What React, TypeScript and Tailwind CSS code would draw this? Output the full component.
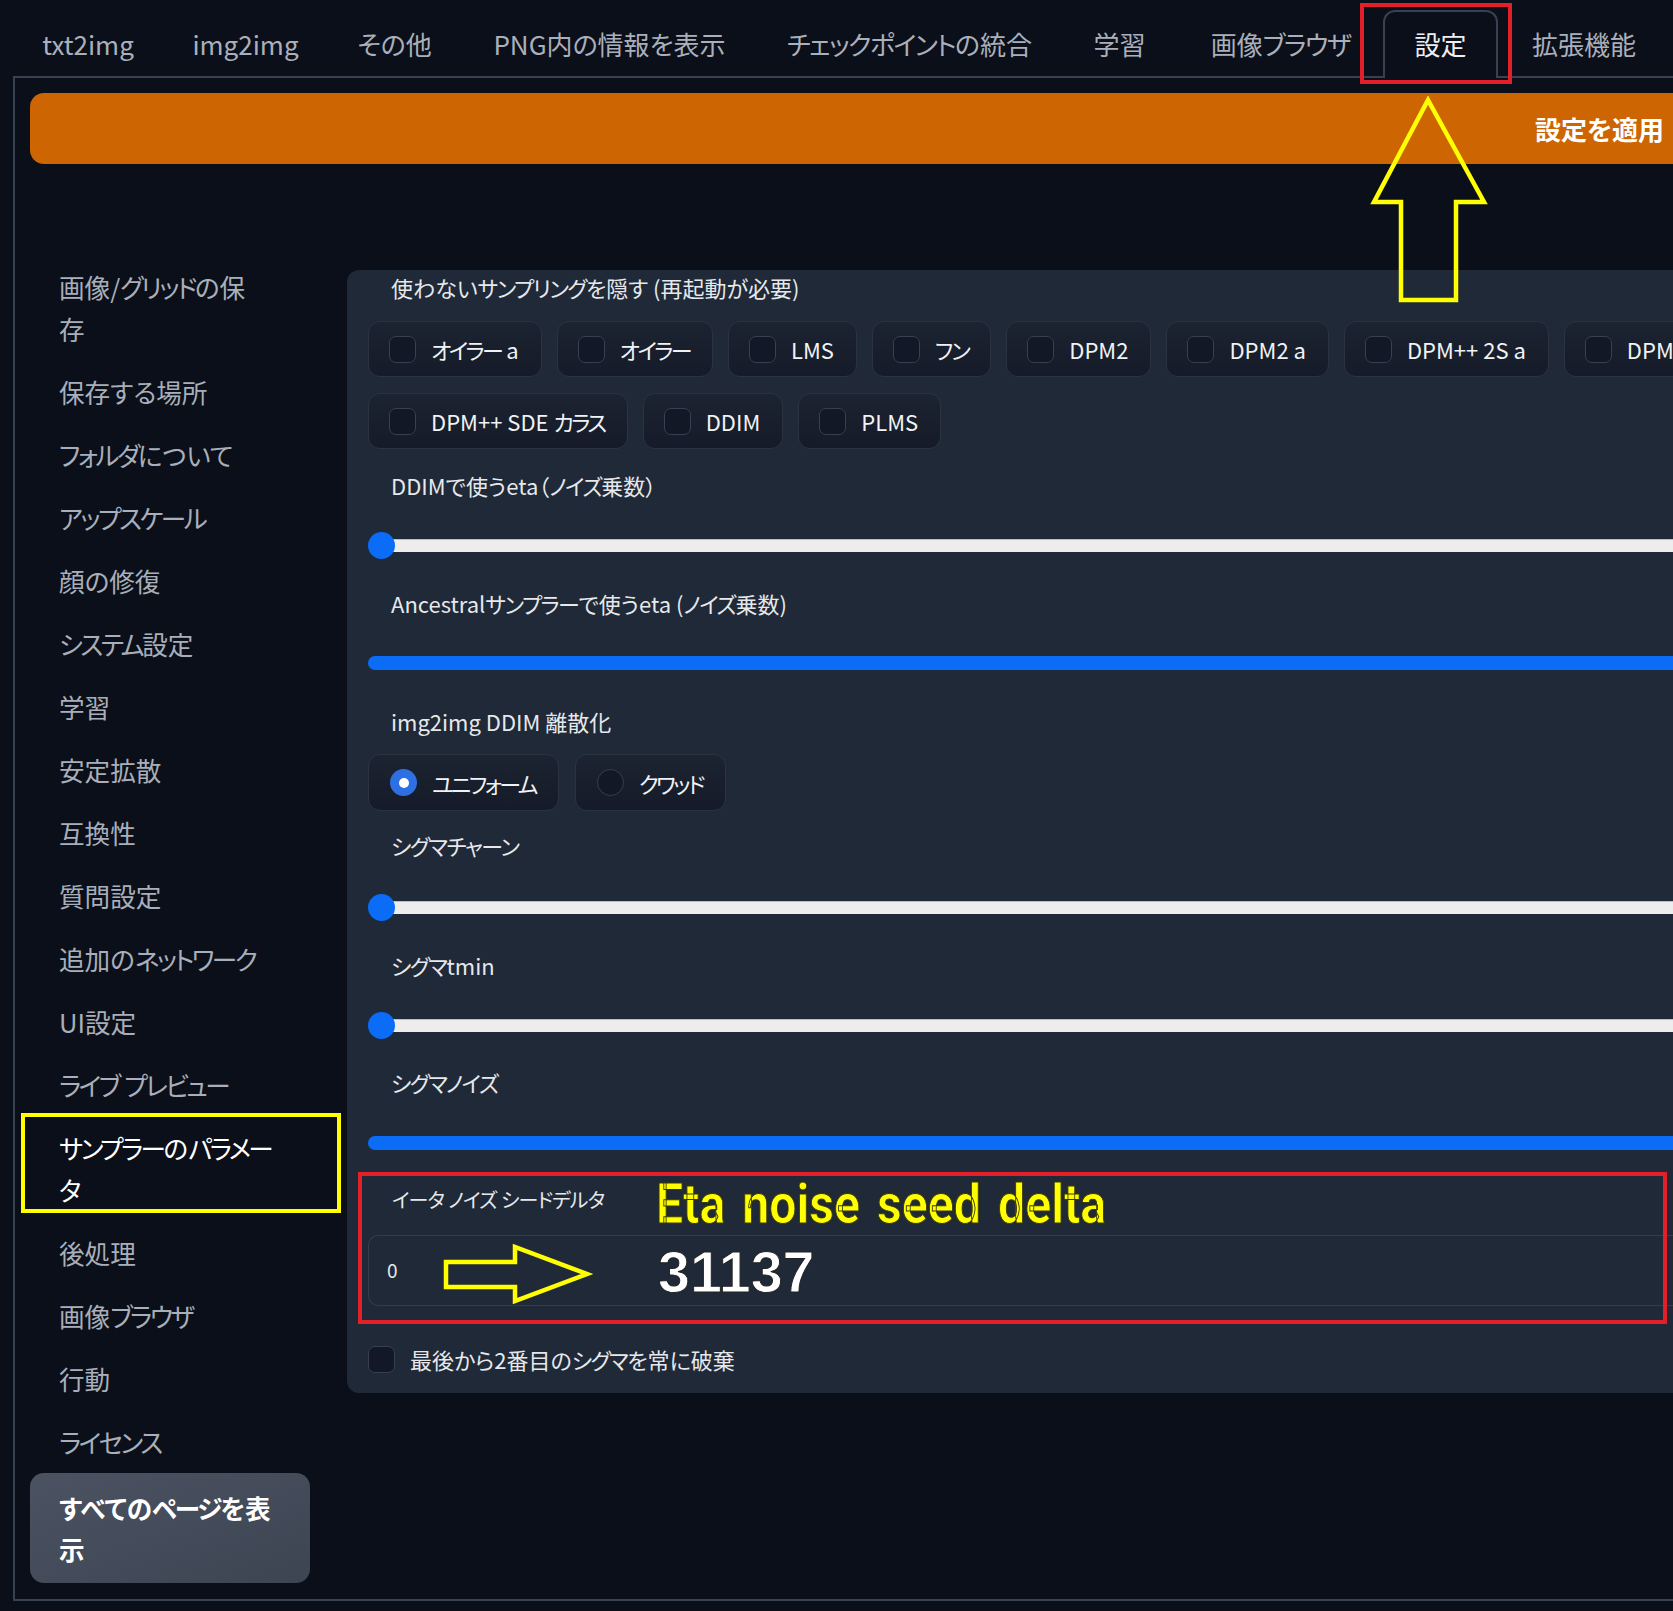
import React from "react";

type Tab = { label: string; cls: string; active?: boolean };

const tabs: Tab[] = [
  { label: "txt2img", cls: "w-[150px]" },
  { label: "img2img", cls: "w-[165px]" },
  { label: "その他", cls: "w-[133px]" },
  { label: "PNG内の情報を表示", cls: "w-[297px]" },
  { label: "チェックポイントの統合", cls: "w-[303px]" },
  { label: "学習", cls: "w-[117px]" },
  { label: "画像ブラウザ", cls: "w-[205px]" },
  { label: "設定", cls: "w-[115px]", active: true },
  { label: "拡張機能", cls: "w-[172px]" },
];

const sideItems: { lines: string[]; active?: boolean }[] = [
  { lines: ["画像/グリッドの保", "存"] },
  { lines: ["保存する場所"] },
  { lines: ["フォルダについて"] },
  { lines: ["アップスケール"] },
  { lines: ["顔の修復"] },
  { lines: ["システム設定"] },
  { lines: ["学習"] },
  { lines: ["安定拡散"] },
  { lines: ["互換性"] },
  { lines: ["質問設定"] },
  { lines: ["追加のネットワーク"] },
  { lines: ["UI設定"] },
  { lines: ["ライブ\u00a0プレビュー"] },
  { lines: ["サンプラーのパラメー", "タ"], active: true },
  { lines: ["後処理"] },
  { lines: ["画像ブラウザ"] },
  { lines: ["行動"] },
  { lines: ["ライセンス"] },
];

const row1 = [
  "オイラー a",
  "オイラー",
  "LMS",
  "フン",
  "DPM2",
  "DPM2 a",
  "DPM++ 2S a",
  "DPM++ 2M",
  "DPM++ SDE",
  "DPM fast",
  "DPM adaptive",
  "LMS カラス",
];
const row2 = ["DPM++ SDE カラス", "DDIM", "PLMS"];

// Katakana runs are drawn a little tighter, as in the reference's Japanese face.
function K({ text, tr }: { text: string; tr: string }) {
  const parts = text.split(/([\u30a0-\u30ff]+)/);
  return (
    <>
      {parts.map((p, i) =>
        /[\u30a0-\u30ff]/.test(p) ? (
          <span key={i} className={tr}>
            {p}
          </span>
        ) : (
          <React.Fragment key={i}>{p}</React.Fragment>
        )
      )}
    </>
  );
}

function Chip({ label }: { label: string }) {
  return (
    <div className="flex h-[56px] shrink-0 items-center gap-[15px] rounded-[12px] border border-[#2b3342] bg-linear-to-b from-[#1c2331] to-[#151b28] pl-[20px] pr-[22px]">
      <span className="h-[27px] w-[27px] shrink-0 rounded-[7px] border border-[#364052] bg-[#121826]" />
      <span className="whitespace-nowrap text-[22px] leading-none text-[#f1f2f4]">
        <K text={label} tr="tracking-[-2.5px]" />
      </span>
    </div>
  );
}

function Radio({ label, checked }: { label: string; checked?: boolean }) {
  return (
    <div className="flex h-[57px] shrink-0 items-center gap-[15px] rounded-[12px] border border-[#2b3342] bg-linear-to-b from-[#1c2331] to-[#151b28] pl-[21px] pr-[22px]">
      {checked ? (
        <span className="flex h-[27px] w-[27px] items-center justify-center rounded-full bg-[#2f6fe4]">
          <span className="h-[10px] w-[10px] rounded-full bg-white" />
        </span>
      ) : (
        <span className="h-[27px] w-[27px] rounded-full border border-[#364052] bg-[#121826]" />
      )}
      <span className="whitespace-nowrap text-[22px] leading-none text-[#f1f2f4]">
        <K text={label} tr="tracking-[-2.5px]" />
      </span>
    </div>
  );
}

function Label({ text, mt }: { text: string; mt: string }) {
  return (
    <div className={`${mt} pl-[44px] text-[22px] leading-[30px] whitespace-nowrap text-[#e6e8eb]`}>
      <K text={text} tr="tracking-[-1.5px]" />
    </div>
  );
}

function Slider({ full, mt }: { full?: boolean; mt: string }) {
  if (full) {
    return (
      <div className={`${mt} flex h-[28px] items-center pl-[21px]`}>
        <div className="h-[14px] w-full rounded-l-full bg-[#0b6cf7]" />
      </div>
    );
  }
  return (
    <div className={`${mt} relative ml-[21px] flex h-[28px] items-center`}>
      <div className="ml-[4px] h-[13px] w-full rounded-l-full border-t border-[#b9bdc4] bg-[#ededed]" />
      <div className="absolute left-0 top-[0.5px] h-[27px] w-[27px] rounded-full bg-[#0b6cf7]" />
    </div>
  );
}

export default function App() {
  return (
    <div className="relative h-[1611px] w-[1673px] overflow-hidden bg-[#0b0f19] font-['Noto_Sans_CJK_JP',sans-serif] [font-feature-settings:'palt']">
      {/* Tabs */}
      <div className="flex h-[76px] items-end pl-[13px]">
        {tabs.map((t) =>
          t.active ? (
            <div
              key={t.label}
              className={`relative z-10 -mb-[2px] flex h-[68px] items-center justify-center rounded-t-[12px] border-2 border-b-0 border-[#374151] bg-[#0b0f19] pb-[3px] text-[26px] text-[#eceef1] ${t.cls}`}
            >
              {t.label}
            </div>
          ) : (
            <div
              key={t.label}
              className={`flex h-[66px] items-center justify-center pt-[1px] text-[26px] whitespace-nowrap text-[#aab0bb] ${t.cls}`}
            >
              <K text={t.label} tr="tracking-[-1.5px]" />
            </div>
          )
        )}
      </div>

      {/* Main container */}
      <div className="ml-[13px] flex h-[1525px] flex-col border-2 border-r-0 border-[#374151]">
        {/* Apply button */}
        <div className="ml-[15px] mt-[15px] flex h-[71px] items-center justify-end rounded-l-[14px] bg-[#cc6502] pr-[9px]">
          <span className="text-[26px] font-bold text-white">設定を適用</span>
        </div>

        <div className="mt-[91px] flex items-start">
          {/* Sidebar */}
          <div className="ml-[15px] flex w-[293px] shrink-0 flex-col">
            {sideItems.map((s, i) => (
              <div
                key={i}
                className={`py-[10.5px] pl-[29px] text-[25.6px] leading-[42px] whitespace-nowrap ${s.active ? "text-white" : "text-[#a9afba]"}`}
              >
                {s.lines.map((l, j) => (
                  <div key={j}>
                    <K text={l} tr="tracking-[-2.5px]" />
                  </div>
                ))}
              </div>
            ))}
            <div className="w-[280px] rounded-[14px] bg-linear-to-br from-[#4b5261] to-[#3d4452] py-[14px] pl-[29px] text-[25.6px] font-bold leading-[41px] text-white">
              <div>
                <K text="すべてのページを表" tr="tracking-[-2px]" />
              </div>
              <div>示</div>
            </div>
          </div>

          {/* Settings panel */}
          <div className="ml-[24px] mt-[15px] flex min-w-0 flex-1 flex-col overflow-hidden rounded-l-[12px] bg-[#1f2937] pb-[20px] pt-[2px]">
            <Label text="使わないサンプリングを隠す (再起動が必要)" mt="mt-0" />
            <div className="mt-[19px] flex flex-col gap-[16px] pl-[21px]">
              <div className="flex gap-[15px]">
                {row1.map((c) => (
                  <Chip key={c} label={c} />
                ))}
              </div>
              <div className="flex gap-[15px]">
                {row2.map((c) => (
                  <Chip key={c} label={c} />
                ))}
              </div>
            </div>

            <Label text="DDIMで使うeta（ノイズ乗数）" mt="mt-[21px]" />
            <Slider mt="mt-[31px]" />
            <Label text="Ancestralサンプラーで使うeta (ノイズ乗数)" mt="mt-[29px]" />
            <Slider full mt="mt-[31px]" />
            <Label text="img2img DDIM 離散化" mt="mt-[29px]" />
            <div className="mt-[18px] flex gap-[16px] pl-[21px]">
              <Radio label="ユニフォーム" checked />
              <Radio label="クワッド" />
            </div>
            <Label text="シグマチャーン" mt="mt-[19px]" />
            <Slider mt="mt-[33px]" />
            <Label text="シグマtmin" mt="mt-[29px]" />
            <Slider mt="mt-[31px]" />
            <Label text="シグマノイズ" mt="mt-[28px]" />
            <Slider full mt="mt-[32px]" />

            <div className="mt-[29px] pl-[45px] text-[20px] leading-[28px] whitespace-nowrap text-[#e6e8eb]">
              <K text="イータ ノイズ シードデルタ" tr="tracking-[-1px]" />
            </div>
            <div className="ml-[21px] mt-[21px] flex h-[71px] items-center rounded-l-[10px] border border-r-0 border-[#343d4d] bg-[#1f2937] pl-[18px]">
              <span className="text-[19px] text-[#e6e8eb]">0</span>
            </div>

            <div className="ml-[21px] mt-[39px] flex h-[28px] items-center gap-[15px]">
              <span className="h-[27px] w-[27px] rounded-[7px] border border-[#364052] bg-[#121826]" />
              <span className="text-[22px] leading-none whitespace-nowrap text-[#e6e8eb]">
                <K text="最後から2番目のシグマを常に破棄" tr="tracking-[-1.5px]" />
              </span>
            </div>
          </div>
        </div>
      </div>

      {/* Annotations */}
      <div className="pointer-events-none absolute left-[1360px] top-[3px] h-[81px] w-[152px] border-4 border-[#e3202a]" />
      <svg className="pointer-events-none absolute left-[1370px] top-[96px]" width="120" height="210" viewBox="0 0 120 210">
        <polygon
          points="58,4 114,106 86,106 86,204 31,204 31,106 4,106"
          fill="none"
          stroke="#ffff00"
          strokeWidth="4.5"
          strokeLinejoin="miter"
        />
      </svg>
      <div className="pointer-events-none absolute left-[21px] top-[1113px] h-[100px] w-[320px] border-4 border-[#ffff00]" />
      <div className="pointer-events-none absolute left-[358px] top-[1172px] h-[152px] w-[1309px] border-4 border-[#e3202a]" />
      <svg className="pointer-events-none absolute left-[440px] top-[1241px]" width="156" height="68" viewBox="0 0 156 68">
        <polygon
          points="6,21 75,21 75,6 147,33 75,60 75,46 6,46"
          fill="none"
          stroke="#ffff00"
          strokeWidth="4.5"
          strokeLinejoin="miter"
        />
      </svg>
      <div className="pointer-events-none absolute left-[656px] top-[1176px] origin-left scale-x-[0.86] whitespace-nowrap font-['Roboto',sans-serif] text-[56px] font-bold leading-none text-[#ffff00] [-webkit-text-stroke:1px_#3a3a00] [word-spacing:6px]">
        Eta noise seed delta
      </div>
      <div className="pointer-events-none absolute left-[658px] top-[1243px] origin-left scale-x-[0.99] whitespace-nowrap font-['Liberation_Sans',sans-serif] text-[58px] font-bold leading-none text-white [-webkit-text-stroke:1px_#222]">
        31137
      </div>
    </div>
  );
}
